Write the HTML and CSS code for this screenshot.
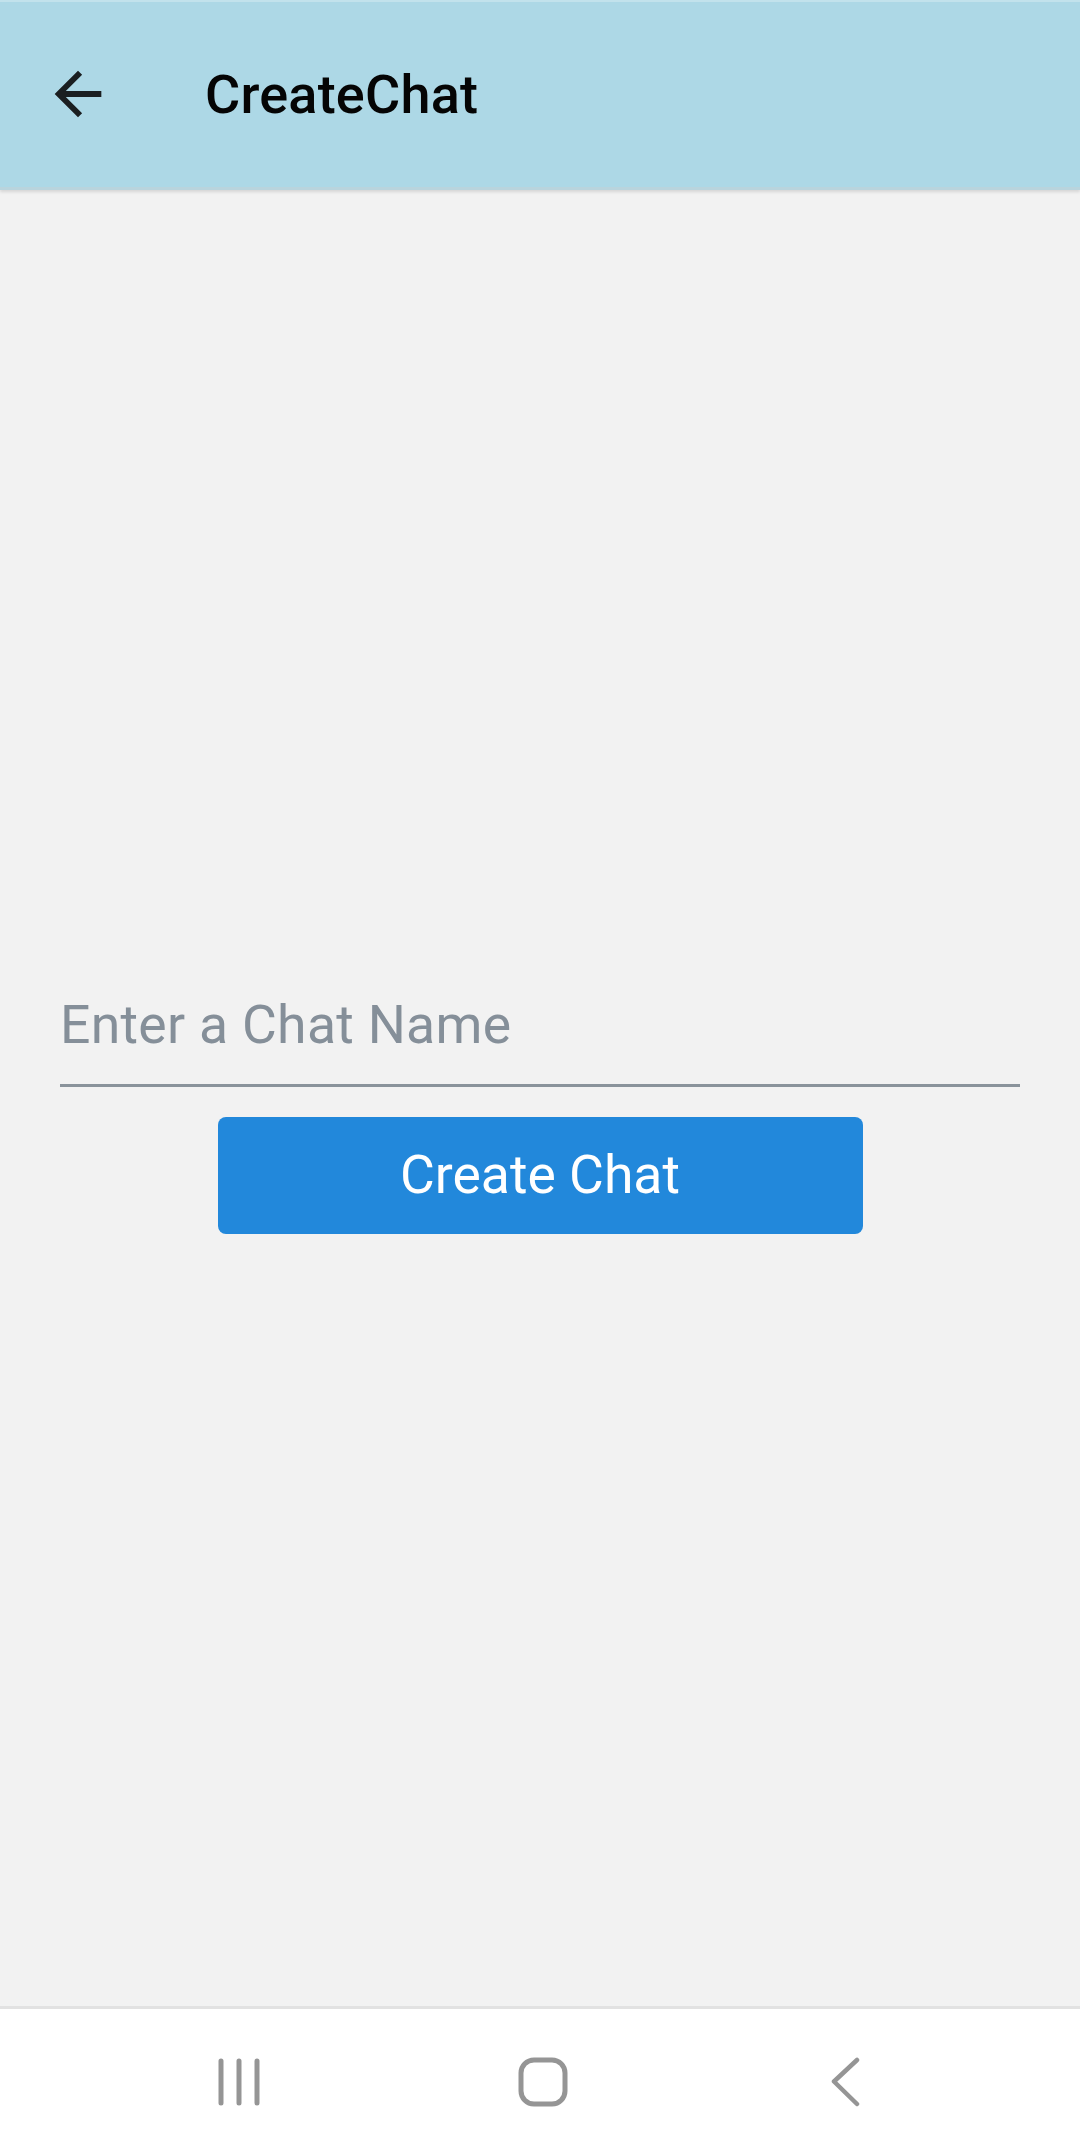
FILE: index.html
```html
<!DOCTYPE html>
<html>
<head>
<meta charset="utf-8">
<link rel="stylesheet" href="styles.css">
</head>
<body>
<div class="screen">
  <header class="appbar">
    <svg class="back" viewBox="0 0 24 24"><path d="M20 11H7.83l5.59-5.59L12 4l-8 8 8 8 1.41-1.41L7.83 13H20v-2z"/></svg>
    <h1 class="title">CreateChat</h1>
  </header>
  <main class="content">
    <div class="form">
      <div class="field"><span class="placeholder">Enter a Chat Name</span></div>
      <button class="btn">Create Chat</button>
    </div>
  </main>
  <nav class="navbar">
    <svg class="recents" viewBox="0 0 44 50"><path d="M4 4v42M22 4v42M40 4v42"/></svg>
    <svg class="home" viewBox="0 0 50 50"><rect x="3" y="3" width="44" height="44" rx="13" ry="13"/></svg>
    <svg class="backnav" viewBox="0 0 32 50"><path d="M27 3L4 24.5 27 47"/></svg>
  </nav>
</div>
</body>
</html>
```
FILE: styles.css
```css
* { box-sizing: border-box; }
html, body { margin: 0; padding: 0; }
body {
  width: 1080px;
  height: 2149px;
  font-family: Roboto, "Noto Sans", sans-serif;
  background: #f2f2f2;
  overflow: hidden;
}
.screen {
  display: flex;
  flex-direction: column;
  height: 2149px;
}
.appbar {
  height: 190px;
  flex: none;
  background: #add8e6;
  border-top: 2px solid #c2e2ec;
  box-shadow: 0 2px 3px rgba(0,0,0,0.12);
  border-bottom: 3px solid #b9d4dd;
  display: flex;
  align-items: center;
  padding-left: 43px;
  position: relative;
  z-index: 1;
}
.back {
  width: 70px;
  height: 70px;
  fill: #1b1f21;
  margin-top: -2px;
}
.title {
  margin: 0 0 0 92px;
  font-size: 54px;
  font-weight: 500;
  color: #050505;
  letter-spacing: 0.2px;
}
.content {
  flex: 1;
  display: flex;
  align-items: flex-start;
  justify-content: center;
  padding-top: 797px;
}
.form {
  width: 960px;
  display: flex;
  flex-direction: column;
  align-items: center;
}
.field {
  width: 960px;
  height: 100px;
  border-bottom: 3px solid #8a939b;
  display: flex;
  align-items: flex-start;
  padding-top: 6px;
}
.placeholder {
  font-size: 53.5px;
  color: #858f99;
  letter-spacing: 0.3px;
}
.btn {
  margin-top: 30px;
  width: 645px;
  height: 117px;
  background: #2288db;
  border: none;
  border-radius: 8px;
  color: #fff;
  font-family: Roboto, sans-serif;
  font-size: 53.5px;
  letter-spacing: 0;
  padding: 0;
  padding-bottom: 2px;
}
.navbar {
  flex: none;
  height: 143px;
  background: #fff;
  border-top: 3px solid #e2e2e2;
  position: relative;
}
.recents, .home, .backnav {
  position: absolute;
  fill: none;
  stroke: #959595;
  stroke-linecap: round;
  stroke-linejoin: round;
}
.recents {
  left: 217px;
  top: 48px;
  width: 44px;
  height: 50px;
  stroke-width: 5;
}
.home {
  left: 518px;
  top: 48px;
  width: 50px;
  height: 50px;
  stroke-width: 5;
}
.backnav {
  left: 830px;
  top: 48px;
  width: 32px;
  height: 50px;
  stroke-width: 4.5;
}
```
